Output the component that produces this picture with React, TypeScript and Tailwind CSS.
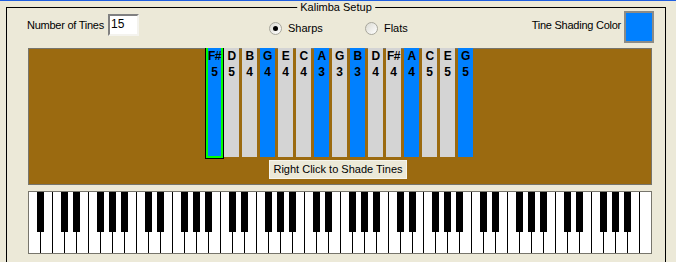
import React from "react";

type Tine = {
  note: string;
  octave: number;
  shaded?: boolean;
  selected?: boolean;
};

const tines: Tine[] = [
  { note: "F#", octave: 5, shaded: true, selected: true },
  { note: "D", octave: 5 },
  { note: "B", octave: 4 },
  { note: "G", octave: 4, shaded: true },
  { note: "E", octave: 4 },
  { note: "C", octave: 4 },
  { note: "A", octave: 3, shaded: true },
  { note: "G", octave: 3 },
  { note: "B", octave: 3, shaded: true },
  { note: "D", octave: 4 },
  { note: "F#", octave: 4 },
  { note: "A", octave: 4, shaded: true },
  { note: "C", octave: 5 },
  { note: "E", octave: 5 },
  { note: "G", octave: 5, shaded: true },
];

// 88 keys: A0 .. C8 -> 52 white keys
const whiteKeys = Array.from({ length: 52 }, (_, i) => "ABCDEFG"[i % 7]);
const hasSharp = (note: string, i: number) => i < 51 && "ACDFG".includes(note);

function TineBar({ tine, last }: { tine: Tine; last: boolean }) {
  const label = (
    <div className="flex flex-col items-center text-[12px] font-bold leading-[16px] text-black">
      <span className="whitespace-nowrap tracking-[-0.5px]">{tine.note}</span>
      <span>{tine.octave}</span>
    </div>
  );

  if (tine.selected) {
    return (
      <div className="h-[111px] w-[19px] shrink-0 border border-t-0 border-black">
        <div className="h-full border-2 border-t-0 border-[#00ff00] bg-[#0080ff]">{label}</div>
      </div>
    );
  }

  return (
    <div
      className={`h-[109px] w-[15px] shrink-0 ${tine.shaded ? "bg-[#0080ff]" : "bg-[#d4d4d4]"} ${last ? "" : "mr-[3px]"}`}
    >
      {label}
    </div>
  );
}

function Radio({ label, checked }: { label: string; checked?: boolean }) {
  return (
    <div className="flex items-center gap-[6px]">
      <span className="flex h-[13px] w-[13px] items-center justify-center rounded-full border border-[#a8a79c] bg-gradient-to-br from-[#dcdbd3] to-white">
        {checked ? <span className="h-[5px] w-[5px] rounded-full bg-black" /> : null}
      </span>
      <span>{label}</span>
    </div>
  );
}

export default function App() {
  return (
    <div
      className="h-[262px] w-[676px] overflow-hidden border-t border-[#1f5ee0] bg-[#ece9d8] text-[11px] text-black"
      style={{ fontFamily: '"Liberation Sans", Arial, sans-serif' }}
    >
      <div className="relative ml-[6px] mt-[6px] h-[300px] w-[660px] border border-black">
        <span className="absolute -top-[7px] left-1/2 -translate-x-1/2 bg-[#ece9d8] px-[3px] leading-[13px]">
          Kalimba Setup
        </span>

        <div className="mt-[3px] flex h-[32px] items-center pl-[20px] pr-[11px]">
          <span className="-mt-[4px] tracking-[-0.25px]">Number of Tines</span>
          <div className="-mt-[5px] ml-[4px] h-[22px] w-[31px] border-2 border-b-[#f4f3ee] border-l-[#808080] border-r-[#f4f3ee] border-t-[#808080] bg-white pl-[1px] text-[12px] leading-[16px]">
            15
          </div>
          <div className="ml-[130px] mt-[2px] w-[96px]">
            <Radio label="Sharps" checked />
          </div>
          <div className="mt-[2px]">
            <Radio label="Flats" />
          </div>
          <div className="ml-auto flex items-center gap-[3px]">
            <span className="-mt-[4px] tracking-[-0.25px]">Tine Shading Color</span>
            <div className="h-[32px] w-[30px] border-2 border-[#8b8b86] bg-[#0080ff]" />
          </div>
        </div>

        <div className="ml-[21px] mt-[5px] flex h-[137px] w-[624px] flex-col border border-[#77756c] bg-[#9b6a10]">
          <div className="-mt-px flex items-start pl-[176px]">
            {tines.map((tine, i) => (
              <TineBar key={`${tine.note}${tine.octave}-${i}`} tine={tine} last={i === tines.length - 1} />
            ))}
          </div>
          <div className="ml-[240px] mt-[1px] flex h-[19px] w-[138px] items-center justify-center border border-[#f6f5ee] bg-[#ece9d8] text-[11px]">
            Right Click to Shade Tines
          </div>
        </div>

        <div className="ml-[21px] mt-[6px] flex h-[63px] w-[624px] border border-[#77756c] bg-white">
          {whiteKeys.map((note, i) => (
            <div
              key={`${note}-${i}`}
              className={`relative h-full flex-1 ${i < 51 ? "border-r border-black" : ""}`}
            >
              {hasSharp(note, i) ? (
                <div className="absolute right-[-4px] top-0 z-10 h-[40px] w-[7px] bg-black" />
              ) : null}
            </div>
          ))}
        </div>
      </div>
    </div>
  );
}
